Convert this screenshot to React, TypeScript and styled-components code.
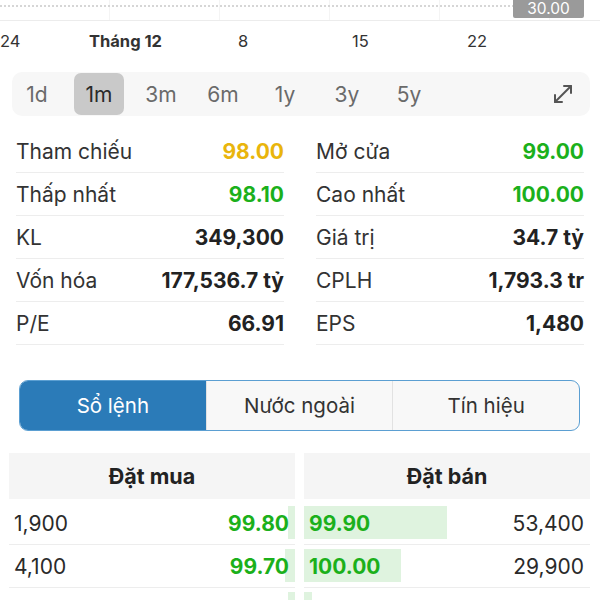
import React from 'react';
import styled, { createGlobalStyle } from 'styled-components';

const GlobalStyle = createGlobalStyle`
  * { box-sizing: border-box; }
  body {
    margin: 0;
    background: #fff;
    font-family: Inter, "Noto Sans", sans-serif;
    color: #2a2a2a;
    overflow: hidden;
  }
`;

const Page = styled.div`
  width: 600px;
  height: 600px;
  overflow: hidden;
`;

const ChartTail = styled.div`
  position: relative;
  height: 21px;
  padding-top: 5px;
  border-bottom: 1px solid #ececec;
  background-image: repeating-linear-gradient(to right, transparent 0 109px, #f4f4f4 109px 110px);
`;

const DottedLine = styled.div`
  width: 514px;
  border-top: 2px dotted #d6d6d6;
`;

const PriceTag = styled.div`
  position: absolute;
  top: 0;
  left: 513px;
  width: 71px;
  height: 18px;
  background: #9a9a9a;
  color: #fff;
  font-size: 15.5px;
  text-align: center;
  line-height: 18px;
  border-radius: 0 0 2px 2px;
`;

const AxisRow = styled.div`
  position: relative;
  height: 40px;
  font-size: 16.5px;
  line-height: 40px;
  color: #333;
`;

const AxisLabel = styled.span<{ $x: number; $bold?: boolean }>`
  position: absolute;
  top: 0;
  left: ${(p) => p.$x}px;
  font-weight: ${(p) => (p.$bold ? 700 : 400)};
`;

const PeriodBar = styled.div`
  margin: 11px 10px 0 12px;
  height: 44px;
  background: #f7f7f7;
  border-radius: 10px;
  display: flex;
  align-items: center;
  gap: 12px;
  padding-right: 16px;
`;

const PeriodItem = styled.div<{ $active?: boolean }>`
  width: 50px;
  height: 42px;
  display: flex;
  align-items: center;
  justify-content: center;
  font-size: 21px;
  color: ${(p) => (p.$active ? '#2a2a2a' : '#6a6a6a')};
  background: ${(p) => (p.$active ? '#c9c9c9' : 'transparent')};
  border-radius: 7px;
`;

const ExpandBtn = styled.div`
  margin-left: auto;
  display: flex;
  align-items: center;
`;

const StatsGrid = styled.div`
  margin: 14px 16px 0;
  display: grid;
  grid-template-columns: 1fr 1fr;
  column-gap: 32px;
`;

const StatRow = styled.div`
  height: 43px;
  display: flex;
  align-items: center;
  justify-content: space-between;
  border-bottom: 1px solid #ededed;
  font-size: 21px;
`;

const StatLabel = styled.span`
  color: #333;
`;

const StatValue = styled.span<{ $color?: string }>`
  font-weight: 700;
  color: ${(p) => p.$color || '#222'};
`;

const Tabs = styled.div`
  margin: 35px 20px 0 19px;
  height: 51px;
  display: flex;
  border: 1.5px solid #5b9fd2;
  border-radius: 9px;
  overflow: hidden;
  background: #f8f8f8;
`;

const Tab = styled.div<{ $active?: boolean }>`
  flex: 1;
  display: flex;
  align-items: center;
  justify-content: center;
  font-size: 20.5px;
  color: ${(p) => (p.$active ? '#fff' : '#333')};
  background: ${(p) => (p.$active ? '#2b7bb8' : 'transparent')};
  & + & {
    border-left: 1px solid ${(p) => (p.$active ? '#2b7bb8' : '#e2e2e2')};
  }
`;

const Book = styled.div`
  margin: 22px 10px 0 9px;
  display: grid;
  grid-template-columns: 1fr 1fr;
  column-gap: 9px;
`;

const BookHead = styled.div`
  height: 46px;
  background: #f5f5f5;
  display: flex;
  align-items: center;
  justify-content: center;
  font-size: 21.5px;
  font-weight: 700;
  color: #222;
  margin-bottom: 3px;
`;

const BookCol = styled.div``;

const BookRow = styled.div`
  position: relative;
  height: 43px;
  display: flex;
  align-items: center;
  justify-content: space-between;
  padding: 0 6px 0 5px;
  font-size: 21px;
  border-bottom: 1px solid #ededed;
`;

const Bar = styled.div<{ $side: 'buy' | 'sell' }>`
  position: absolute;
  top: 4px;
  bottom: 5px;
  ${(p) => (p.$side === 'buy' ? 'right: 0;' : 'left: 0;')}
  background: #dff3df;
`;

const Volume = styled.span`
  position: relative;
  color: #2a2a2a;
`;

const Price = styled.span`
  position: relative;
  font-weight: 700;
  color: #1bb01b;
`;

const stats: [string, string, string?][][] = [
  [
    ['Tham chiếu', '98.00', '#e9b50c'],
    ['Mở cửa', '99.00', '#1bb01b'],
  ],
  [
    ['Thấp nhất', '98.10', '#1bb01b'],
    ['Cao nhất', '100.00', '#1bb01b'],
  ],
  [
    ['KL', '349,300'],
    ['Giá trị', '34.7 tỷ'],
  ],
  [
    ['Vốn hóa', '177,536.7 tỷ'],
    ['CPLH', '1,793.3 tr'],
  ],
  [
    ['P/E', '66.91'],
    ['EPS', '1,480'],
  ],
];

const buys = [
  { vol: '1,900', price: '99.80', bar: 7 },
  { vol: '4,100', price: '99.70', bar: 10 },
  { vol: '', price: '', bar: 7 },
];

const sells = [
  { vol: '53,400', price: '99.90', bar: 143 },
  { vol: '29,900', price: '100.00', bar: 97 },
  { vol: '', price: '', bar: 8 },
];

const periods = ['1d', '1m', '3m', '6m', '1y', '3y', '5y'];

const ExpandIcon = () => (
  <svg width="22" height="22" viewBox="0 0 22 22" fill="none" stroke="#555" strokeWidth="2" strokeLinecap="round" strokeLinejoin="round">
    <path d="M3 19L19 3" />
    <path d="M12 3h7v7" />
    <path d="M3 12v7h7" />
  </svg>
);

export default function App() {
  return (
    <Page>
      <GlobalStyle />
      <ChartTail>
        <DottedLine />
        <PriceTag>30.00</PriceTag>
      </ChartTail>
      <AxisRow>
        <AxisLabel $x={0}>24</AxisLabel>
        <AxisLabel $x={89} $bold>
          Tháng 12
        </AxisLabel>
        <AxisLabel $x={238}>8</AxisLabel>
        <AxisLabel $x={352}>15</AxisLabel>
        <AxisLabel $x={467}>22</AxisLabel>
      </AxisRow>
      <PeriodBar>
        {periods.map((p) => (
          <PeriodItem key={p} $active={p === '1m'}>
            {p}
          </PeriodItem>
        ))}
        <ExpandBtn>
          <ExpandIcon />
        </ExpandBtn>
      </PeriodBar>
      <StatsGrid>
        {stats.map((row) =>
          row.map(([label, value, color]) => (
            <StatRow key={label}>
              <StatLabel>{label}</StatLabel>
              <StatValue $color={color}>{value}</StatValue>
            </StatRow>
          ))
        )}
      </StatsGrid>
      <Tabs>
        <Tab $active>Sổ lệnh</Tab>
        <Tab>Nước ngoài</Tab>
        <Tab>Tín hiệu</Tab>
      </Tabs>
      <Book>
        <BookCol>
          <BookHead>Đặt mua</BookHead>
          {buys.map((b, i) => (
            <BookRow key={i}>
              <Bar $side="buy" style={{ width: b.bar }} />
              <Volume>{b.vol}</Volume>
              <Price>{b.price}</Price>
            </BookRow>
          ))}
        </BookCol>
        <BookCol>
          <BookHead>Đặt bán</BookHead>
          {sells.map((s, i) => (
            <BookRow key={i}>
              <Bar $side="sell" style={{ width: s.bar }} />
              <Price>{s.price}</Price>
              <Volume>{s.vol}</Volume>
            </BookRow>
          ))}
        </BookCol>
      </Book>
    </Page>
  );
}
